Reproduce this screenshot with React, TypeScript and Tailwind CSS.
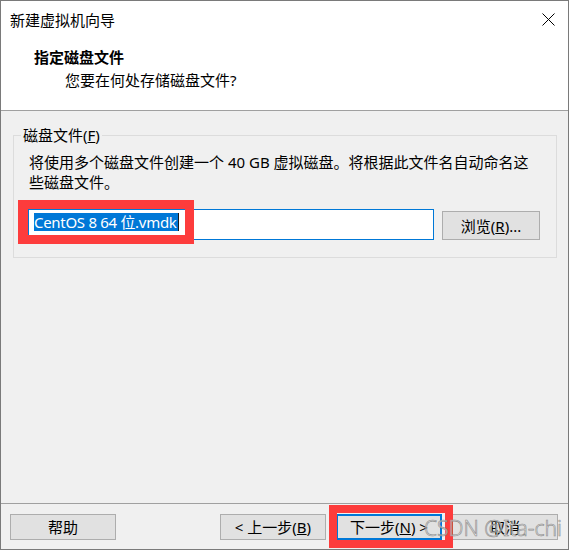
import React from 'react';

const font = "font-['Segoe_UI','Noto_Sans','Noto_Sans_CJK_SC',sans-serif]";

const Btn = ({ children, primary = false }: { children: React.ReactNode; primary?: boolean }) => (
  <button
    className={
      primary
        ? 'w-[106px] h-[26px] bg-[#e1e1e1] border-2 border-[#0078d7] text-[15px] leading-[20px] text-black flex items-center justify-center'
        : 'w-[106px] h-[26px] bg-[#e1e1e1] border border-[#adadad] text-[15px] leading-[20px] text-black flex items-center justify-center'
    }
  >
    {children}
  </button>
);

const App = () => {
  return (
    <div className={`relative w-[570px] h-[551px] bg-white ${font} text-black text-[15px] leading-[20px]`}>
      <div className="w-[569px] h-[550px] border border-[#7a7a7a] flex flex-col">
        {/* title bar */}
        <div className="h-[38px] flex items-center justify-between pl-[9px] pr-[13px] bg-white">
          <span>新建虚拟机向导</span>
          <svg width="13" height="13" viewBox="0 0 13 13" className="mt-[-1px]">
            <path d="M0.5 0.5 L12.5 12.5 M12.5 0.5 L0.5 12.5" stroke="#000" strokeWidth="1" fill="none" />
          </svg>
        </div>

        {/* header */}
        <div className="bg-white pt-[8px] pb-[20px] border-b border-[#a0a0a0]">
          <div className="pl-[33px] font-bold">指定磁盘文件</div>
          <div className="pl-[64px] mt-[3px]">您要在何处存储磁盘文件?</div>
        </div>

        {/* body */}
        <div className="flex-1 bg-[#f0f0f0] pt-[14px]">
          <fieldset className="ml-[12px] w-[544px] border border-[#dcdcdc] pl-[15px] pr-[10px] pb-[17px]">
            <legend className="-ml-[8px] px-[2px]">
              磁盘文件(<span className="underline">F</span>)
            </legend>
            <div className="pt-[7px]">
              <div className="whitespace-nowrap">将使用多个磁盘文件创建一个 40 GB 虚拟磁盘。将根据此文件名自动命名这</div>
              <div className="whitespace-nowrap">些磁盘文件。</div>
            </div>
            <div className="flex items-end mt-[17px] -ml-px">
              <div className="relative">
                <div className="w-[406px] h-[31px] bg-white border border-[#0078d7] pl-[5px] pt-[3px] flex items-start">
                  <span className="bg-[#0078d7] text-white leading-[18px] tracking-[-0.3px] pr-[1px]">CentOS 8 64 位.vmdk</span>
                  <span className="w-px h-[18px] bg-[#1a1a1a]" />
                </div>
                <div className="absolute left-[-10px] top-[-9px] w-[176px] h-[44px] border-[9px] border-l-[10px] border-[#fd3c3c]" />
              </div>
              <div className="ml-[8px] w-[98px] h-[29px] bg-[#e1e1e1] border border-[#adadad] flex items-center justify-center">
                浏览(<span className="underline">R</span>)...
              </div>
            </div>
          </fieldset>
        </div>

        {/* footer */}
        <div className="bg-[#f0f0f0] border-t border-[#a0a0a0] pt-[10px] pb-[9px] pl-[9px] pr-[10px] flex items-center">
          <Btn>帮助</Btn>
          <div className="flex-1" />
          <div className="flex gap-[10px]">
            <Btn>&lt; 上一步(<span className="underline">B</span>)</Btn>
            <div className="relative">
              <Btn primary>下一步(<span className="underline">N</span>) &gt;</Btn>
              <div className="absolute -left-[7px] -top-[9px] w-[124px] h-[43px] border-[8px] border-[#fd3c3c]" />
            </div>
            <Btn>取消</Btn>
          </div>
        </div>
      </div>

      {/* watermark */}
      <div className="absolute left-[424px] top-[515px] text-[21px] leading-[26px] font-light text-[#f2f2f2]/60 [-webkit-text-stroke:0.6px_#8c8c8c] font-['Noto_Sans',sans-serif] pointer-events-none whitespace-nowrap">
        CSDN @Ita-chi
      </div>
    </div>
  );
};

export default App;
